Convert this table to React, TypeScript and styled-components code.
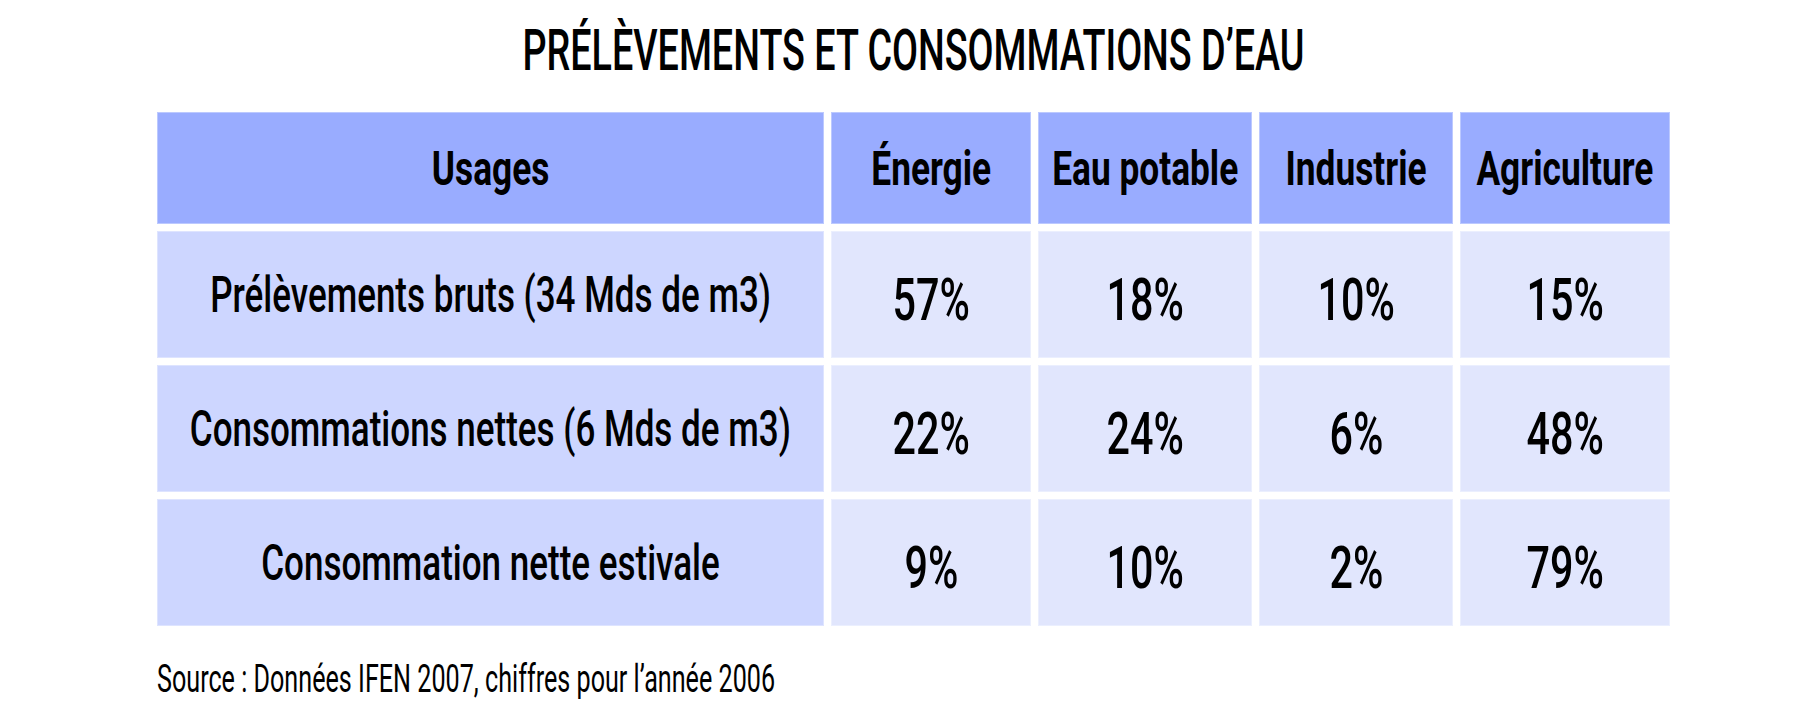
import React from 'react';
import styled, { createGlobalStyle } from 'styled-components';

const GlobalStyle = createGlobalStyle`
  body {
    margin: 0;
    background: #ffffff;
    color: #000000;
    font-family: Roboto, "Liberation Sans", sans-serif;
  }
`;

const usages = ['Énergie', 'Eau potable', 'Industrie', 'Agriculture'];

const rows = [
  { label: 'Prélèvements bruts (34 Mds de m3)', values: ['57%', '18%', '10%', '15%'] },
  { label: 'Consommations nettes (6 Mds de m3)', values: ['22%', '24%', '6%', '48%'] },
  { label: 'Consommation nette estivale', values: ['9%', '10%', '2%', '79%'] },
];

function App() {
  return (
    <Page>
      <GlobalStyle />
      <Title>
        <Squeeze $scale={0.65}>PRÉLÈVEMENTS ET CONSOMMATIONS D’EAU</Squeeze>
      </Title>
      <Table>
        <HeadCell>
          <Squeeze $scale={0.72}>Usages</Squeeze>
        </HeadCell>
        {usages.map((u) => (
          <HeadCell key={u}>
            <Squeeze $scale={0.72}>{u}</Squeeze>
          </HeadCell>
        ))}
        {rows.map((row) => (
          <React.Fragment key={row.label}>
            <LabelCell>
              <Squeeze $scale={0.7}>{row.label}</Squeeze>
            </LabelCell>
            {row.values.map((v, i) => (
              <ValueCell key={i}>
                <Squeeze $scale={0.7}>{v}</Squeeze>
              </ValueCell>
            ))}
          </React.Fragment>
        ))}
      </Table>
      <Source>
        <Squeeze $scale={0.645} $origin="left center">
          Source : Données IFEN 2007, chiffres pour l’année 2006
        </Squeeze>
      </Source>
    </Page>
  );
}

const Page = styled.div`
  width: 1513px;
  padding: 21px 0 0 157px;
`;

const Squeeze = styled.span<{ $scale: number; $origin?: string }>`
  display: inline-block;
  white-space: nowrap;
  transform: scaleX(${(p) => p.$scale});
  transform-origin: ${(p) => p.$origin || 'center center'};
`;

const Title = styled.h1`
  display: flex;
  justify-content: center;
  margin: 0 0 33px;
  font-size: 58px;
  line-height: 58px;
  font-weight: 500;
`;

const Table = styled.div`
  display: grid;
  grid-template-columns: 667px 200px 214px 194px 210px;
  grid-template-rows: 112px 127px 127px 127px;
  gap: 7px;
`;

const Cell = styled.div`
  display: flex;
  align-items: center;
  justify-content: center;
  overflow: visible;
  box-shadow: inset 0 0 0 1px rgba(255, 255, 255, 0.35);
`;

const HeadCell = styled(Cell)`
  background: #99acff;
  font-size: 49px;
  line-height: 49px;
  font-weight: 700;
`;

const LabelCell = styled(Cell)`
  background: #cdd6ff;
  font-size: 50px;
  line-height: 50px;
  font-weight: 500;
`;

const ValueCell = styled(Cell)`
  background: #e1e6fd;
  padding-top: 10px;
  font-size: 59px;
  line-height: 59px;
  font-weight: 500;
`;

const Source = styled.p`
  margin: 34px 0 0;
  font-size: 39px;
  line-height: 39px;
  font-weight: 400;
`;

export default App;
